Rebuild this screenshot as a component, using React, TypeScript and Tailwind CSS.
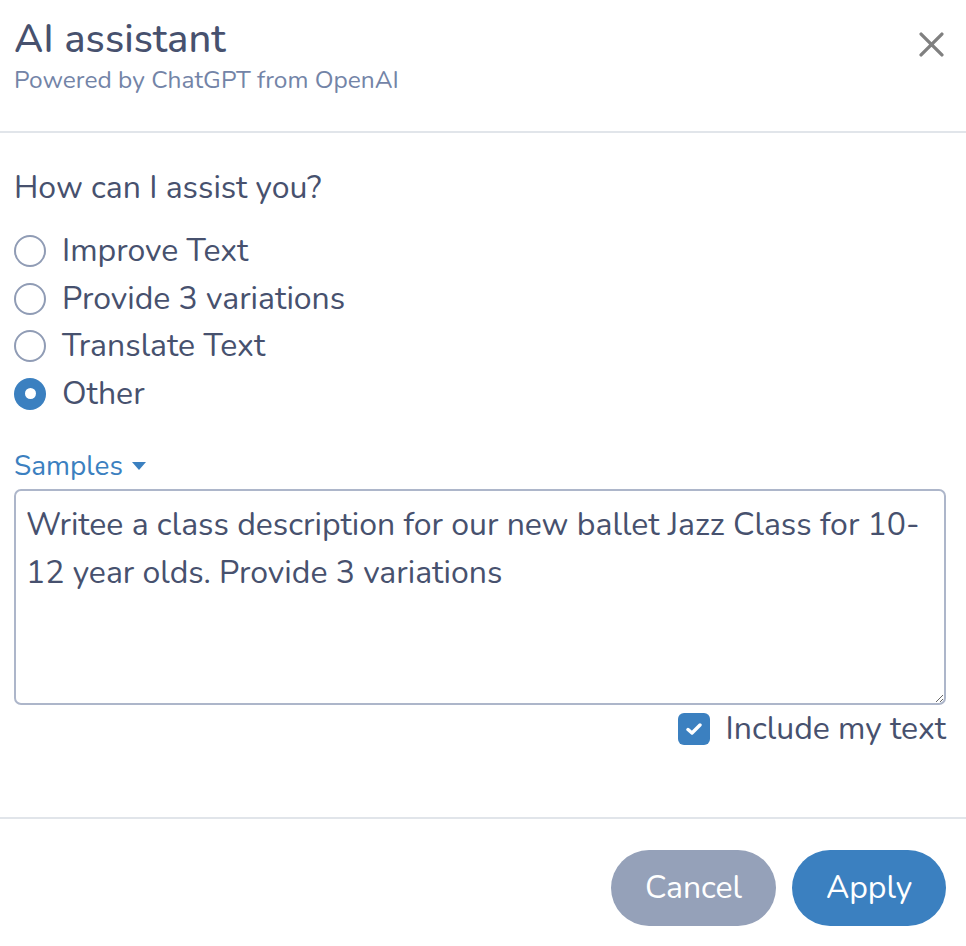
import { useState } from "react";

const options = ["Improve Text", "Provide 3 variations", "Translate Text", "Other"];

export default function App() {
  const [choice, setChoice] = useState("Other");
  const [includeText, setIncludeText] = useState(true);
  const [prompt, setPrompt] = useState(
    "Writee a class description for our new ballet Jazz Class for 10-12 year olds. Provide 3 variations"
  );

  return (
    <div className="w-[966px] h-[946px] bg-white flex flex-col text-[#47516e] font-['Nunito','Lato',sans-serif]">
      {/* header */}
      <div className="h-[133px] flex justify-between border-b-2 border-[#e1e5ea] pl-[14px] pr-[20px] pt-[14px]">
        <div>
          <h1 className="text-[40px] leading-[50px] font-medium">AI assistant</h1>
          <p className="text-[24.5px] leading-[32px] text-[#7384a7]">Powered by ChatGPT from OpenAI</p>
        </div>
        <button className="mt-[15px] h-[30px] w-[30px] flex items-center justify-center">
          <svg width="25" height="25" viewBox="0 0 24 24" fill="none" stroke="#808080" strokeWidth="3.2" strokeLinecap="round">
            <path d="M2 2 L22 22 M22 2 L2 22" />
          </svg>
        </button>
      </div>

      {/* body */}
      <div className="flex-1 pl-[14px] pr-[20px] pt-[35px]">
        <p className="text-[32px] leading-[40px]">How can I assist you?</p>
        <div className="mt-[19px] flex flex-col">
          {options.map((opt) => {
            const active = opt === choice;
            return (
              <label key={opt} className="flex items-center gap-[16px] h-[47.7px] cursor-pointer" onClick={() => setChoice(opt)}>
                {active ? (
                  <span className="w-[32px] h-[32px] rounded-full bg-[#3b80c0] flex items-center justify-center">
                    <span className="w-[11px] h-[11px] rounded-full bg-white" />
                  </span>
                ) : (
                  <span className="w-[32px] h-[32px] rounded-full border-2 border-[#909cb5] bg-white" />
                )}
                <span className="text-[32px] leading-[40px]">{opt}</span>
              </label>
            );
          })}
        </div>

        <button className="mt-[31px] flex items-center gap-[9px] text-[28px] leading-[34px] text-[#3b80c0]">
          Samples
          <svg width="14" height="8" viewBox="0 0 14 8">
            <path d="M0 0 H14 L7 8 Z" fill="#3b80c0" />
          </svg>
        </button>

        <textarea
          value={prompt}
          onChange={(e) => setPrompt(e.target.value)}
          className="mt-[6px] block w-full h-[216px] rounded-[7px] border-2 border-[#adb6ca] px-[10px] py-[10px] text-[32px] leading-[48px] text-[#47516e] outline-none resize-y"
        />

        <label className="mt-[8px] flex items-center justify-end gap-[16px] cursor-pointer" onClick={() => setIncludeText(!includeText)}>
          <span className={`w-[32px] h-[32px] rounded-[6px] flex items-center justify-center ${includeText ? "bg-[#3b80c0]" : "border-2 border-[#909cb5]"}`}>
            {includeText && (
              <svg width="16" height="12" viewBox="0 0 16 12" fill="none" stroke="white" strokeWidth="3.4" strokeLinecap="round" strokeLinejoin="round">
                <path d="M2 6.5 L6 10 L14 2" />
              </svg>
            )}
          </span>
          <span className="text-[32px] leading-[32px]">Include my text</span>
        </label>
      </div>

      {/* footer */}
      <div className="h-[129px] border-t-2 border-[#e1e5ea] flex items-start justify-end gap-[16px] px-[20px] pt-[31px]">
        <button className="h-[76px] w-[165px] rounded-full bg-[#95a1b9] text-white text-[32px]">Cancel</button>
        <button className="h-[76px] w-[154px] rounded-full bg-[#3b80c0] text-white text-[32px]">Apply</button>
      </div>
    </div>
  );
}
